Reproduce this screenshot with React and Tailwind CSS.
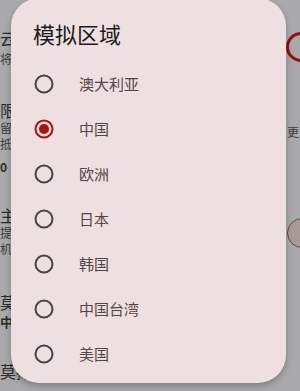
import React from "react";

const items = ["澳大利亚", "中国", "欧洲", "日本", "韩国", "中国台湾", "美国"];

function Radio({ checked }) {
  return (
    <svg width="20" height="20" viewBox="0 0 20 20" className="shrink-0">
      <circle cx="10" cy="10" r="8.5" fill="none" stroke={checked ? "#a8140f" : "#48444c"} strokeWidth="2" />
      {checked && <circle cx="10" cy="10" r="5" fill="#a8140f" />}
    </svg>
  );
}

export default function App() {
  return (
    <div
      className="relative w-[300px] h-[391px] overflow-hidden bg-[#a9a8aa] text-[#2a2626]"
      style={{ fontFamily: '"Noto Sans CJK SC", "Noto Sans", sans-serif' }}
    >
      {/* dimmed page behind the dialog */}
      <div className="flex flex-col pl-0 pt-[28px] text-[#2e2a2a]">
        <div className="text-[16px] leading-[20px]">云端同步</div>
        <div className="text-[12px] leading-[16px] mt-[3px] text-[#3e3a3a]">将设置同步</div>
        <div className="text-[16px] leading-[20px] mt-[33px]">限制</div>
        <div className="text-[12px] leading-[16px] text-[#3e3a3a]">留言限制</div>
        <div className="text-[12px] leading-[16px] text-[#3e3a3a]">抵的</div>
        <div className="text-[12px] leading-[16px] font-bold mt-[7px]">0</div>
        <div className="text-[16px] leading-[20px] mt-[30px]">主题</div>
        <div className="text-[12px] leading-[16px] text-[#3e3a3a]">提示</div>
        <div className="text-[12px] leading-[16px] text-[#3e3a3a]">机械</div>
        <div className="text-[16px] leading-[20px] mt-[35px]">莫拟</div>
        <div className="text-[13px] leading-[16px] font-bold mt-[2px]">中国</div>
        <div className="text-[16px] leading-[20px] mt-[31px]">莫拟区</div>
      </div>
      <div className="absolute left-[286px] top-[32px] w-[30px] h-[30px] rounded-full border-[3px] border-[#8c1512]" />
      <div className="absolute left-[287px] top-[124px] text-[12px] leading-[16px] text-[#3e3a3a]">更</div>
      <div className="absolute left-[287px] top-[218px] w-[30px] h-[30px] rounded-full border-[1.5px] border-[#5b4c4c] bg-[#a99a97]" />

      {/* dialog */}
      <div className="absolute left-[11px] top-[-2px] w-[275px] h-[385px] rounded-[28px] bg-[#eee0e0] shadow-[0_3px_6px_rgba(0,0,0,0.25)] flex flex-col pt-[21px]">
        <div className="pl-[22px] text-[22px] leading-[28px] text-[#201a1a]">模拟区域</div>
        <div className="mt-[14px] flex flex-col">
          {items.map((t, i) => (
            <div key={t} className="h-[45px] flex items-center pl-[23px]">
              <Radio checked={i === 1} />
              <span className="ml-[25px] text-[15px] leading-[20px] text-[#544646]">{t}</span>
            </div>
          ))}
        </div>
      </div>
    </div>
  );
}
